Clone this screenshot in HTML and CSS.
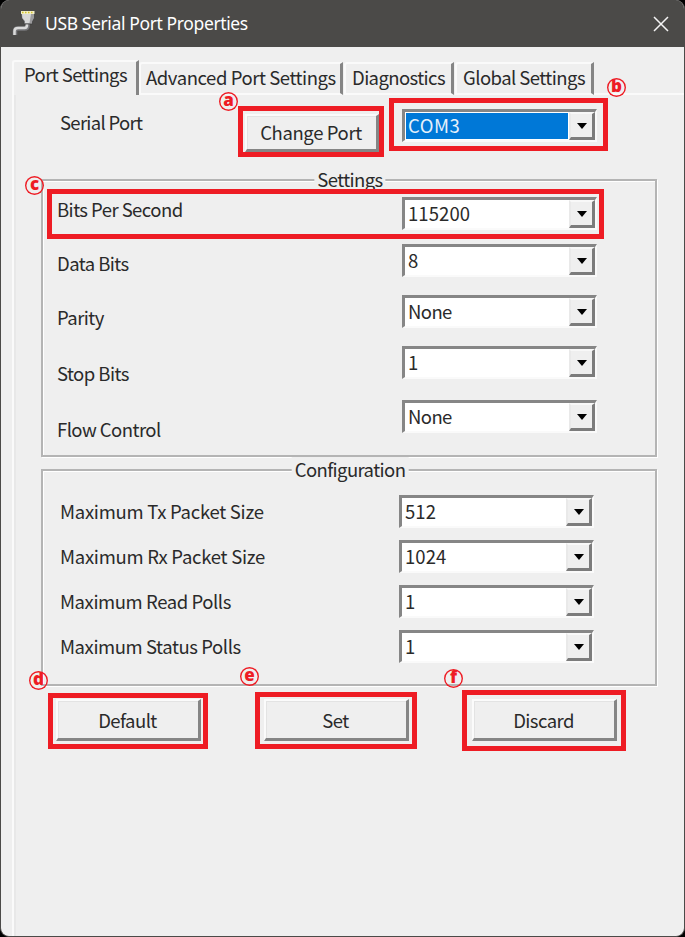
FILE: index.html
```html
<!DOCTYPE html>
<html lang="en">
<head>
<meta charset="utf-8">
<title>USB Serial Port Properties</title>
<link rel="stylesheet" href="styles.css">
</head>
<body>
<div class="window">
  <header class="titlebar">
    <svg class="plug" width="24" height="26" viewBox="0 0 24 26">
      <path d="M3 25V21Q3 18.500 6 18.500H12.500Q15.500 18.500 15.500 15.500V13" fill="none" stroke="#77777a" stroke-width="4.500"/>
      <path d="M2.500 25V21Q2.500 18 6 18H12.500Q15 18 15 15V12" fill="none" stroke="#dadada" stroke-width="2.500"/>
      <path d="M9 3H22.500V8L20.500 11.500V14H12V11.500L9.500 8Z" fill="#9b9b9d" stroke="#3a3a3a" stroke-width=".7"/>
      <path d="M10 4H19L17.500 13H13V11L10.500 8Z" fill="#d8d8d8"/>
      <path d="M9 1H22.500V4H9Z" fill="#f3efc8"/>
      <path d="M10 2.500H22" stroke="#d3c32c" stroke-width="1.500" stroke-dasharray="1.500 1.500"/>
    </svg>
    <h1 class="title">USB Serial Port Properties</h1>
    <svg class="close" width="16" height="16" viewBox="0 0 16 16"><path d="M1 1L15 15M15 1L1 15" stroke="#f4f4f4" stroke-width="1.500"/></svg>
  </header>
  <nav class="tabs">
    <div class="tab tab-active"><span>Port Settings</span></div>
    <div class="tab tab-advanced"><span>Advanced Port Settings</span></div>
    <div class="tab tab-diagnostics"><span>Diagnostics</span></div>
    <div class="tab tab-global"><span>Global Settings</span></div>
    <div class="tab-rest"></div>
  </nav>
  <main class="panel">
    <div class="port-row">
      <span class="port-label">Serial Port</span>
      <button class="button change">Change Port</button>
      <div class="combo selected"><span class="value">COM3</span><span class="arrow"></span></div>
    </div>
    <section class="group settings">
      <h2 class="legend">Settings</h2>
      <div class="labels">
        <span>Bits Per Second</span><span>Data Bits</span><span>Parity</span><span>Stop Bits</span><span>Flow Control</span>
      </div>
      <div class="combos">
        <div class="combo"><span class="value">115200</span><span class="arrow"></span></div>
        <div class="combo"><span class="value">8</span><span class="arrow"></span></div>
        <div class="combo"><span class="value word">None</span><span class="arrow"></span></div>
        <div class="combo"><span class="value">1</span><span class="arrow"></span></div>
        <div class="combo"><span class="value word">None</span><span class="arrow"></span></div>
      </div>
    </section>
    <section class="group config">
      <h2 class="legend">Configuration</h2>
      <div class="labels">
        <span class="wide">Maximum Tx Packet Size</span><span class="wide">Maximum Rx Packet Size</span><span>Maximum Read Polls</span><span>Maximum Status Polls</span>
      </div>
      <div class="combos">
        <div class="combo"><span class="value">512</span><span class="arrow"></span></div>
        <div class="combo"><span class="value">1024</span><span class="arrow"></span></div>
        <div class="combo"><span class="value">1</span><span class="arrow"></span></div>
        <div class="combo"><span class="value">1</span><span class="arrow"></span></div>
      </div>
    </section>
    <div class="actions">
      <button class="button">Default</button>
      <button class="button">Set</button>
      <button class="button">Discard</button>
    </div>
  </main>
</div>
<div class="mark mark-a"></div><span class="tag tag-a">a</span>
<div class="mark mark-b"></div><span class="tag tag-b">b</span>
<div class="mark mark-c"></div><span class="tag tag-c">c</span>
<div class="mark mark-d"></div><span class="tag tag-d">d</span>
<div class="mark mark-e"></div><span class="tag tag-e">e</span>
<div class="mark mark-f"></div><span class="tag tag-f">f</span>
</body>
</html>
```
FILE: styles.css
```css
* { box-sizing: border-box; }
body {
  margin: 0;
  width: 685px;
  height: 937px;
  position: relative;
  overflow: hidden;
  background: #000;
  color: #2a2a2a;
  font: 18.5px/24px "Noto Sans CJK KR", sans-serif;
  letter-spacing: -.6px;
  white-space: nowrap;
}
.window {
  height: 937px;
  background: #efefef;
  border: 1px solid #4b4a48;
  border-top: 0;
  border-radius: 9px;
  overflow: hidden;
}
.titlebar {
  display: flex;
  align-items: center;
  height: 47px;
  padding: 0 15px 0 11px;
  background: #4b4a48;
}
.plug { margin-top: -1px; }
.title {
  margin: -1px auto 0 9px;
  color: #fff;
  font: 17.5px/24px "Noto Sans", sans-serif;
  letter-spacing: -.38px;
}
.tabs {
  display: flex;
  align-items: flex-end;
  height: 48px;
  padding-left: 11px;
}
.tab {
  height: 33px;
  border-top: 2px solid #fafafa;
  border-left: 2px solid #fafafa;
  border-bottom: 2px solid #fafafa;
  border-right: 3px solid #858585;
  border-top-left-radius: 3px;
  line-height: 26px;
}
.tab-active {
  width: 127px;
  height: 35px;
  border-bottom: 0;
  padding-left: 10px;
  line-height: 24px;
}
.tab-advanced { width: 204px; padding-left: 5px; letter-spacing: -.43px; }
.tab-diagnostics { width: 110px; margin-left: 1px; padding-left: 6px; }
.tab-global { width: 139px; margin-left: 1px; padding-left: 6px; letter-spacing: -.55px; }
.tab-rest { flex: 1; height: 2px; background: #fafafa; }
.panel {
  height: 842px;
  margin-left: 11px;
  padding-left: 27px;
  border-left: 2px solid #fafafa;
  box-shadow: inset 2px 0 #e8e8e8;
}
.port-row {
  display: flex;
  height: 84px;
  padding-left: 19px;
}
.port-label { width: 185px; padding-top: 15px; letter-spacing: -.7px; }
.button {
  display: block;
  width: 145px;
  height: 42px;
  padding: 0 1px 0 0;
  background: #efefef;
  border: 2px solid #fbfbfb;
  border-right: 3px solid #858585;
  border-bottom: 3px solid #858585;
  box-shadow: inset 1px 1px #e3e3e3;
  color: inherit;
  font: inherit;
  line-height: 34px;
  letter-spacing: -.55px;
  text-align: center;
}
.change { width: 134px; height: 38px; margin: 19px 23px 0 0; line-height: 33px; letter-spacing: -.38px; }
.combo {
  display: flex;
  width: 195px;
  height: 33px;
  background: #fff;
  border: 3px solid #868686;
  border-right: 2px solid #fafafa;
  border-bottom: 2px solid #fafafa;
}
.value { flex: 1; padding-left: 3px; line-height: 26px; letter-spacing: .1px; }
.value.word { letter-spacing: -.6px; }
.arrow {
  width: 26px;
  background: #efefef;
  border: 2px solid #f8f8f8;
  border-left-color: #e9e9e9;
  border-right: 3px solid #7c7c7c;
  border-bottom: 3px solid #7c7c7c;
  display: flex;
  justify-content: center;
  align-items: center;
}
.arrow::after {
  content: "";
  border: 5.500px solid transparent;
  border-top: 6px solid #000;
  border-bottom: 0;
}
.port-row .combo { margin-top: 14px; }
.selected .value { background: #0078d7; color: #e6f1fb; box-shadow: inset 0 0 0 1px #fff; line-height: 27px; letter-spacing: .5px; }
.group {
  display: flex;
  justify-content: space-between;
  position: relative;
  width: 616px;
  border: 2px solid #b4b4b4;
  box-shadow: 1px 1px #fff, inset 1px 1px #fff;
}
.legend {
  position: absolute;
  top: -14px;
  left: 50%;
  transform: translateX(-50%);
  margin: 0 0 0 1px;
  padding: 0 3px;
  background: #efefef;
  font: inherit;
}
.labels, .combos { display: flex; flex-direction: column; }
.settings { height: 278px; padding: 16px 58px 0 14px; }
.settings .labels { gap: 30px; letter-spacing: -.55px; }
.settings .labels span:nth-child(n+4) { margin-top: 2px; }
.settings .combo:nth-child(2) { margin-top: 14px; }
.settings .combo:nth-child(3), .settings .combo:nth-child(4) { margin-top: 18px; }
.settings .combo:nth-child(5) { margin-top: 21px; }
.config { height: 217px; margin-top: 12px; padding: 24px 61px 0 17px; }
.config .labels { gap: 21px; padding-top: 4px; letter-spacing: -.42px; }
.config .labels .wide { letter-spacing: -.27px; }
.config .combos { gap: 12px; }
.actions { display: flex; gap: 63px; margin: 13px 0 0 15px; }
.mark { position: absolute; border: 5px solid #ee1c24; }
.mark-a { left: 238px; top: 106px; width: 146px; height: 51px; }
.mark-b { left: 389px; top: 98px; width: 219px; height: 53px; }
.mark-c { left: 47px; top: 189px; width: 557px; height: 50px; }
.mark-d { left: 48px; top: 693px; width: 160px; height: 56px; }
.mark-e { left: 255px; top: 692px; width: 162px; height: 57px; }
.mark-f { left: 462px; top: 690px; width: 164px; height: 61px; }
.tag {
  position: absolute;
  width: 19px;
  height: 19px;
  box-shadow: inset 0 0 0 1.400px #ee1c24;
  border-radius: 50%;
  color: #ee1c24;
  font: 800 17px/16px "Open Sans", "Noto Sans", sans-serif;
  letter-spacing: 0;
  text-align: center;
}
.tag-a { left: 219px; top: 92px; }
.tag-b { left: 607px; top: 78px; }
.tag-c { left: 25px; top: 176px; }
.tag-d { left: 29px; top: 671px; }
.tag-e { left: 240px; top: 667px; }
.tag-f { left: 444px; top: 669px; }
```
